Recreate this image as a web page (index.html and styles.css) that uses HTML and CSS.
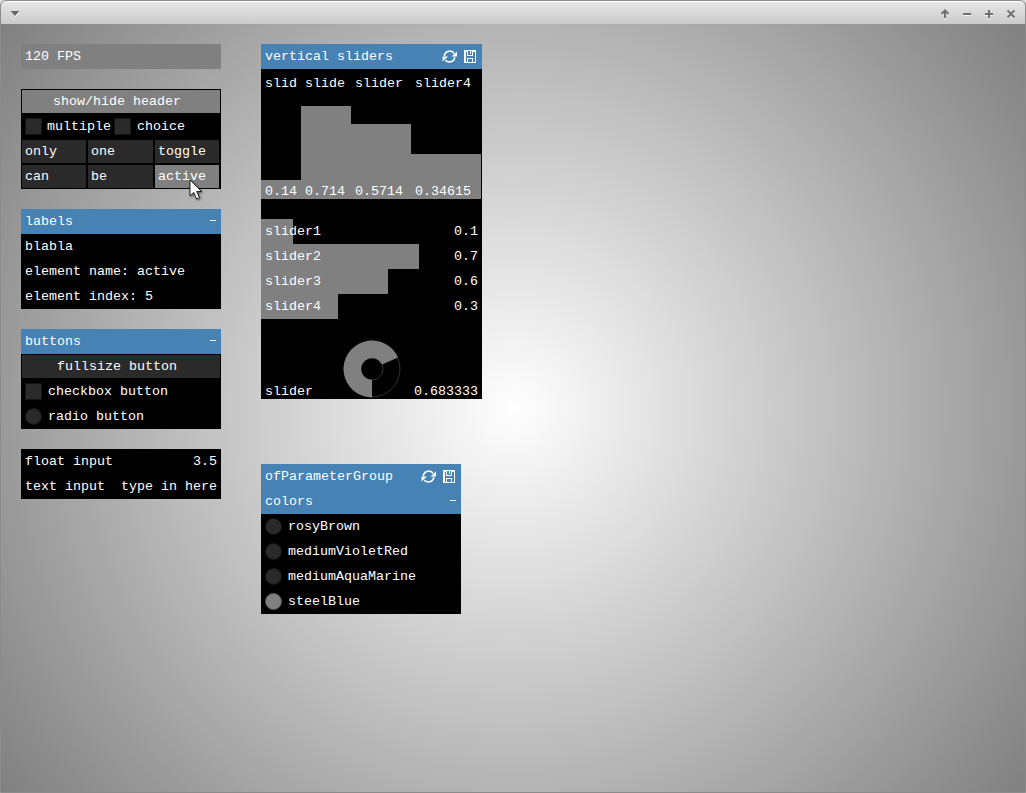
FILE: index.html
```html
<!DOCTYPE html>
<html lang="en">
<head>
<meta charset="utf-8">
<title>gui</title>
<link rel="stylesheet" href="styles.css">
</head>
<body>
<svg class="defs" width="0" height="0">
  <symbol id="refresh" viewBox="0 0 16 14">
    <path d="M2.500 6V4.500L4.500 2L7.500 1L10.500 1.800L12 3.500M12.500 7V9L10.500 11.200L7.500 12L4.500 11.200L3.500 10" fill="none" stroke="#fff" stroke-width="1.6"/>
    <path d="M15 1.500V6.500H9.500ZM.5 11.500V6.500H6Z" fill="#fff"/>
  </symbol>
  <symbol id="save" viewBox="0 0 12 13" shape-rendering="crispEdges">
    <path d="M0 0H12V13H0ZM1.500 1.500V11.500H3V7.500H9V11.500H10.500V1.500H9V6H3V1.500ZM4 1V5H8V1H7V3.500H6V1ZM4 8.500V11.500H8V8.500Z" fill="#fff" fill-rule="evenodd"/>
  </symbol>
</svg>
<div class="window">
  <header class="titlebar">
    <svg width="12" height="8" viewBox="0 0 12 8"><path d="M2 2H11L6.500 7Z" fill="#fff"/><path d="M1.500 1H10.500L6 6Z" fill="#666"/></svg>
    <div class="controls">
      <svg width="10" height="10" viewBox="0 0 10 10"><path d="M5 9V2.500M1.500 5L5 1.500L8.500 5"/></svg>
      <svg width="10" height="10" viewBox="0 0 10 10"><path d="M1 5H9"/></svg>
      <svg width="10" height="10" viewBox="0 0 10 10"><path d="M1 5H9M5 1V9"/></svg>
      <svg width="10" height="10" viewBox="0 0 10 10"><path d="M1.500 1.500L8.500 8.500M8.500 1.500L1.500 8.500"/></svg>
    </div>
  </header>
  <main class="canvas">
    <div class="column left">
      <section class="panel fps"><div class="row">120 FPS</div></section>
      <section class="panel">
        <div class="row button lit">show/hide header</div>
        <div class="row pair"><span class="check tight"><i class="box"></i>multiple</span><span class="check"><i class="box"></i>choice</span></div>
        <div class="grid">
          <div class="cell">only</div><div class="cell">one</div><div class="cell">toggle</div>
          <div class="cell">can</div><div class="cell">be</div><div class="cell lit">active</div>
        </div>
      </section>
      <section class="panel">
        <div class="row head">labels<i class="minus"></i></div>
        <div class="row">blabla</div>
        <div class="row">element name: active</div>
        <div class="row">element index: 5</div>
      </section>
      <section class="panel">
        <div class="row head">buttons<i class="minus"></i></div>
        <div class="row button">fullsize button</div>
        <div class="row option"><i class="box"></i>checkbox button</div>
        <div class="row option"><i class="box round"></i>radio button</div>
      </section>
      <section class="panel">
        <div class="row"><span>float input</span><span>3.5</span></div>
        <div class="row"><span>text input</span><span>type in here</span></div>
      </section>
    </div>
    <div class="column right">
      <section class="panel wide">
        <div class="row head">vertical sliders<span class="icons"><svg width="16" height="14"><use href="#refresh"/></svg><svg width="12" height="13"><use href="#save"/></svg></span></div>
        <div class="vsliders">
          <div class="vs v1"><span>slid</span><span>0.14</span></div>
          <div class="vs v2"><span>slide</span><span>0.714</span></div>
          <div class="vs v3"><span>slider</span><span>0.5714</span></div>
          <div class="vs v4"><span>slider4</span><span>0.34615</span></div>
        </div>
        <div class="row hs h1"><span>slider1</span><span>0.1</span></div>
        <div class="row hs h2"><span>slider2</span><span>0.7</span></div>
        <div class="row hs h3"><span>slider3</span><span>0.6</span></div>
        <div class="row hs h4"><span>slider4</span><span>0.3</span></div>
        <div class="dial">
          <span>slider</span>
          <svg width="58" height="58" viewBox="-29 -29 58 58">
            <circle r="28" fill="none" stroke="#333"/><circle r="11" fill="none" stroke="#333"/>
            <path d="M0 28.400A28.400 28.400 0 1 1 25.940 -11.550L10.050 -4.470A11 11 0 1 0 0 11Z" fill="#808080"/>
          </svg>
          <span>0.683333</span>
        </div>
      </section>
      <section class="panel">
        <div class="row head">ofParameterGroup<span class="icons"><svg width="16" height="14"><use href="#refresh"/></svg><svg width="12" height="13"><use href="#save"/></svg></span></div>
        <div class="row head">colors<i class="minus"></i></div>
        <div class="row option"><i class="box round"></i>rosyBrown</div>
        <div class="row option"><i class="box round"></i>mediumVioletRed</div>
        <div class="row option"><i class="box round"></i>mediumAquaMarine</div>
        <div class="row option"><i class="box round on"></i>steelBlue</div>
      </section>
    </div>
  </main>
  <svg class="cursor" width="14" height="22" viewBox="0 0 14 22"><path d="M1 1V17L4.800 13.500L7.500 20L10.500 18.700L7.700 12.500H12.700Z" fill="#fff" stroke="#222"/></svg>
</div>
</body>
</html>
```
FILE: styles.css
```css
* { box-sizing: border-box; }
body {
  margin: 0;
  background: #ddd;
  font: 13.33px/25px "Liberation Mono", monospace;
  color: #fff;
}
.defs { position: absolute; }
.window {
  position: relative;
  width: 1026px;
  height: 793px;
  overflow: hidden;
  border: 1px solid #8c8c8c;
  border-radius: 6px 6px 0 0;
  background: #8c8c8c;
}
.titlebar {
  display: flex;
  justify-content: space-between;
  align-items: center;
  height: 23px;
  padding: 1px 9px 0 8px;
  border-top: 1px solid #fff;
  background: linear-gradient(#e6e6e6, #cbcbcb);
}
.controls { display: flex; gap: 12px; }
.controls path { fill: none; stroke: #707070; stroke-width: 2; }
.controls svg { filter: drop-shadow(0 1px 0 #f4f4f4); }
.canvas {
  display: flex;
  gap: 40px;
  height: 768px;
  padding: 20px;
  background: radial-gradient(circle 641px at 512px 384px, #fff, #808080);
}
.column { display: flex; flex-direction: column; gap: 20px; }
.right { gap: 65px; }
.panel { width: 200px; background: #000; }
.wide { width: 221px; }
.row {
  display: flex;
  justify-content: space-between;
  height: 25px;
  padding: 0 4px;
  white-space: pre;
}
.fps { background: #808080; }
.head { background: #4682b4; }
.button {
  justify-content: center;
  padding-right: 12px;
  border: 1px solid #000;
  line-height: 23px;
  background: #2a2a2a;
}
.row.lit, .cell.lit { background: #808080; }
.pair { justify-content: flex-start; gap: 2px; }
.check { display: flex; gap: 6px; }
.tight { gap: 5px; margin-right: 1px; }
.box {
  flex: none;
  width: 17px;
  height: 17px;
  margin-top: 4px;
  border: 1px solid #151515;
  border-radius: 1px;
  background: #2a2a2a;
}
.round { border-radius: 50%; }
.on { background: #808080; border-color: #555; }
.option { justify-content: flex-start; gap: 6px; }
.grid { display: grid; grid-template-columns: 66px 67px 66px; height: 50px; }
.cell {
  height: 25px;
  padding-left: 3px;
  border: 1px solid #000;
  line-height: 23px;
  background: #2a2a2a;
}
.minus { width: 6px; height: 1px; margin: 11px 1px 0 0; background: #fff; }
.icons { display: flex; gap: 6px; padding: 6px 2px 0 0; }
.vsliders { display: flex; height: 150px; padding-bottom: 20px; }
.vs {
  display: flex;
  flex-direction: column;
  justify-content: space-between;
  padding: 2px 0 0 4px;
  height: 130px;
  background: linear-gradient(#808080, #808080) no-repeat bottom;
}
.vs span:last-child { margin-bottom: -5px; }
.v1 { width: 40px; background-size: 100% 19px; }
.v2 { width: 50px; background-size: 100% 93px; }
.v3 { width: 60px; background-size: 100% 75px; }
.v4 { width: 70px; background-size: 100% 45px; }
.hs { background: linear-gradient(#808080, #808080) no-repeat left; }
.h1 { background-size: 32px 100%; }
.h2 { background-size: 158px 100%; }
.h3 { background-size: 127px 100%; }
.h4 { background-size: 77px 100%; }
.dial {
  display: grid;
  grid-template-columns: 1fr 58px 1fr;
  align-items: end;
  height: 80px;
  padding: 0 4px;
}
.dial span { margin-bottom: -5px; }
.dial span:last-child { justify-self: end; }
.dial svg { margin-bottom: 1px; }
.cursor { position: absolute; left: 188px; top: 178px; filter: drop-shadow(1px 1px 1px #0008); }
```
